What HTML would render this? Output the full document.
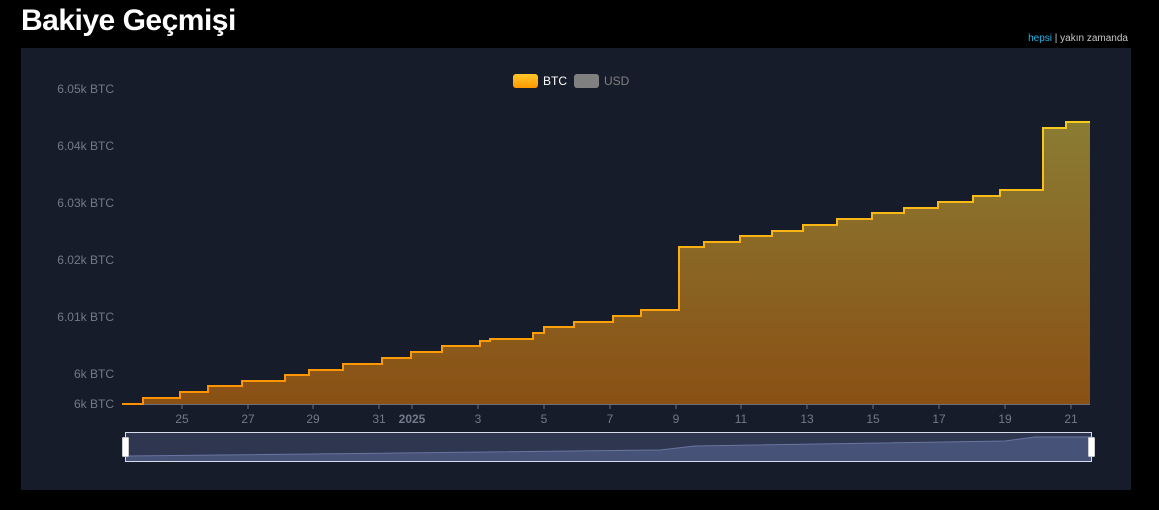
<!DOCTYPE html>
<html><head><meta charset="utf-8"><style>
body{margin:0;width:1159px;height:510px;background:#000;overflow:hidden;font-family:"Liberation Sans",sans-serif;position:relative}
h1{position:absolute;left:21px;top:4px;margin:0;font-size:30px;font-weight:bold;color:#fff;letter-spacing:-0.5px}
.links{position:absolute;right:31px;top:33px;font-size:10px;color:#c8c8c8}
.links span{color:#1fb6e8}
.panel{position:absolute;left:21px;top:48px;width:1110px;height:442px;background:#171c2a}
svg{position:absolute;left:0;top:0}
</style></head><body>
<h1>Bakiye Geçmişi</h1>
<div class="links"><span>hepsi</span> | yakın zamanda</div>
<div class="panel"></div>
<svg width="1159" height="510" font-family="Liberation Sans, sans-serif">
<defs>
<linearGradient id="f" gradientUnits="userSpaceOnUse" x1="0" y1="122" x2="0" y2="404"><stop offset="0" stop-color="#8a7c33"/><stop offset="1" stop-color="#8a5014"/></linearGradient>
<linearGradient id="l" gradientUnits="userSpaceOnUse" x1="0" y1="122" x2="0" y2="404"><stop offset="0" stop-color="#f6cb1c"/><stop offset="0.5" stop-color="#fbad10"/><stop offset="1" stop-color="#ff9000"/></linearGradient>
<linearGradient id="lg" x1="0" y1="0" x2="0" y2="1"><stop offset="0" stop-color="#ffc82a"/><stop offset="1" stop-color="#ff9800"/></linearGradient>
</defs>
<g font-size="12" fill="#737988" text-anchor="end">
<text x="114" y="93">6.05k BTC</text><text x="114" y="150">6.04k BTC</text><text x="114" y="207">6.03k BTC</text><text x="114" y="264">6.02k BTC</text><text x="114" y="321">6.01k BTC</text><text x="114" y="378">6k BTC</text><text x="114" y="408">6k BTC</text>
</g>
<rect x="513" y="74" width="25" height="14" rx="3" fill="url(#lg)"/>
<text x="543" y="85" font-size="12" fill="#fff">BTC</text>
<rect x="574" y="74" width="25" height="14" rx="3" fill="#808080"/>
<text x="604" y="85" font-size="12" fill="#808080">USD</text>
<line x1="122" y1="404.5" x2="1090" y2="404.5" stroke="#6a6f7c"/>
<path d="M122 404H143V398H180V392H208V386H242V381H285V375H309V370H343V364H382V358H411V352H442V346H480V341H490V339H533V333H544V327H574V322H613V316H641V310H679V247H704V242H740V236H772V231H803V225H837V219H872V213H904V208H938V202H973V196H1000V190H1043V128H1066V122H1090V404Z" fill="url(#f)"/>
<path d="M122 404H143V398H180V392H208V386H242V381H285V375H309V370H343V364H382V358H411V352H442V346H480V341H490V339H533V333H544V327H574V322H613V316H641V310H679V247H704V242H740V236H772V231H803V225H837V219H872V213H904V208H938V202H973V196H1000V190H1043V128H1066V122H1090" fill="none" stroke="url(#l)" stroke-width="2"/>
<g stroke="#6a6f7c"><line x1="182" y1="405" x2="182" y2="409"/><line x1="248" y1="405" x2="248" y2="409"/><line x1="313" y1="405" x2="313" y2="409"/><line x1="379" y1="405" x2="379" y2="409"/><line x1="412" y1="405" x2="412" y2="409"/><line x1="478" y1="405" x2="478" y2="409"/><line x1="544" y1="405" x2="544" y2="409"/><line x1="610" y1="405" x2="610" y2="409"/><line x1="676" y1="405" x2="676" y2="409"/><line x1="741" y1="405" x2="741" y2="409"/><line x1="807" y1="405" x2="807" y2="409"/><line x1="873" y1="405" x2="873" y2="409"/><line x1="939" y1="405" x2="939" y2="409"/><line x1="1005" y1="405" x2="1005" y2="409"/><line x1="1071" y1="405" x2="1071" y2="409"/></g>
<g font-size="12" fill="#737988" text-anchor="middle">
<text x="182" y="423">25</text><text x="248" y="423">27</text><text x="313" y="423">29</text><text x="379" y="423">31</text><text x="412" y="423" font-weight="bold">2025</text><text x="478" y="423">3</text><text x="544" y="423">5</text><text x="610" y="423">7</text><text x="676" y="423">9</text><text x="741" y="423">11</text><text x="807" y="423">13</text><text x="873" y="423">15</text><text x="939" y="423">17</text><text x="1005" y="423">19</text><text x="1071" y="423">21</text>
</g>
<rect x="125.5" y="432.5" width="966" height="29" fill="#2e3650" stroke="#d8dcea"/>
<path d="M126 456L400 453L660 450L695 446L1005 441L1035 437L1091 437V461H126Z" fill="#465278"/>
<path d="M126 456L400 453L660 450L695 446L1005 441L1035 437L1091 437" fill="none" stroke="#6a75a0"/>
<rect x="122.5" y="437.5" width="6" height="19" rx="1" fill="#fff" stroke="#ccc"/>
<rect x="1088.5" y="437.5" width="6" height="19" rx="1" fill="#fff" stroke="#ccc"/>
</svg>
</body></html>
